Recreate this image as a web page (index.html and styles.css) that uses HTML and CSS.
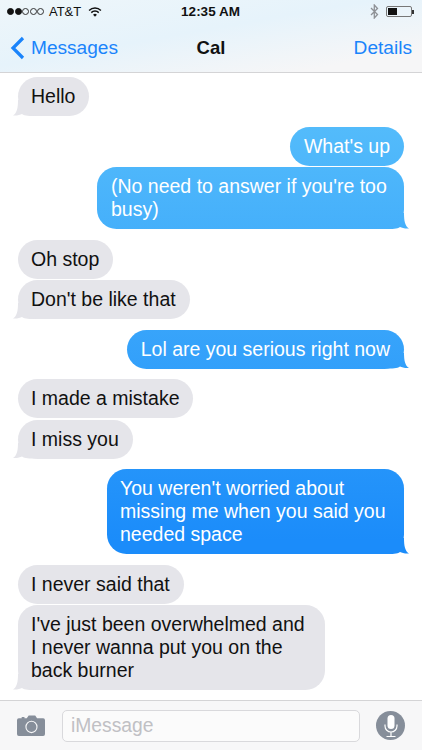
FILE: index.html
```html
<!DOCTYPE html>
<html lang="en">
<head>
  <meta charset="UTF-8" />
  <meta name="viewport" content="width=device-width, initial-scale=1.0"/>
  <title>Cal</title>
  <link rel="stylesheet" href="styles.css">
</head>
<body>
  <header class="top">
    <div class="status">
      <div class="status-left">
        <span class="dot full"></span><span class="dot full"></span><span class="dot"></span><span class="dot"></span><span class="dot"></span>
        <span class="carrier">AT&amp;T</span>
        <svg class="wifi" width="14" height="10" viewBox="0 0 15 11">
          <path d="M1 3.8a9.2 9.2 0 0 1 13 0" fill="none" stroke="#111" stroke-width="1.6"/>
          <path d="M3.4 6.2a5.8 5.8 0 0 1 8.2 0" fill="none" stroke="#111" stroke-width="1.6"/>
          <path d="M7.5 10.8 5.4 8.4a3 3 0 0 1 4.2 0z" fill="#111"/>
        </svg>
      </div>
      <div class="clock">12:35 AM</div>
      <div class="status-right">
        <svg class="bt" width="9" height="15" viewBox="0 0 9 15">
          <path d="M1 4l6.5 6.5L4.3 14V1l3.2 3.5L1 11" fill="none" stroke="#8e9196" stroke-width="1.3"/>
        </svg>
        <div class="battery"><div class="charge"></div></div>
        <div class="battery-tip"></div>
      </div>
    </div>
    <nav class="navbar">
      <a class="back">
        <svg width="15" height="24" viewBox="0 0 15 24">
          <path d="M13 2 3 12l10 10" fill="none" stroke="#1a84fb" stroke-width="3.2"/>
        </svg>
        Messages
      </a>
      <strong class="title">Cal</strong>
      <a class="details">Details</a>
    </nav>
  </header>

  <main class="thread">
    <div class="msg in tail">Hello</div>
    <div class="msg out group">What's up</div>
    <div class="msg out tail close">(No need to answer if you're too busy)</div>
    <div class="msg in group">Oh stop</div>
    <div class="msg in tail close">Don't be like that</div>
    <div class="msg out tail group">Lol are you serious right now</div>
    <div class="msg in group">I made a mistake</div>
    <div class="msg in tail close">I miss you</div>
    <div class="msg out tail group narrow">You weren't worried about missing me when you said you needed space</div>
    <div class="msg in group">I never said that</div>
    <div class="msg in tail close">I've just been overwhelmed and I never wanna put you on the back burner</div>
  </main>

  <footer class="composer">
    <svg class="camera" width="28" height="21" viewBox="0 0 30 22" preserveAspectRatio="none">
      <path fill-rule="evenodd" fill="#868e9a" d="M2 3.5h3V2h3v1.5h2.5L12.5 .5h7l2 3H28a2 2 0 0 1 2 2V20a2 2 0 0 1-2 2H2a2 2 0 0 1-2-2V5.5a2 2 0 0 1 2-2zM15.5 6a6.5 6.5 0 1 0 0 13 6.5 6.5 0 0 0 0-13zm0 1.2a5.3 5.3 0 1 1 0 10.6 5.3 5.3 0 0 1 0-10.6z"/>
    </svg>
    <div class="field">iMessage</div>
    <div class="mic">
      <svg width="16" height="24" viewBox="0 0 16 24">
        <rect x="4.5" y="1" width="7" height="14" rx="3.5" fill="#fff"/>
        <path d="M2 10.5V12a6 6 0 0 0 12 0v-1.5M8 18v4M3.5 22.5h9" fill="none" stroke="#fff" stroke-width="1.2"/>
      </svg>
    </div>
  </footer>
</body>
</html>
```

FILE: styles.css
```css
body {
  margin: 0;
  height: 750px;
  overflow: hidden;
  display: flex;
  flex-direction: column;
  font-family: "Liberation Sans", Arial, sans-serif;
  background-color: white;
  color: #111;
}
.top {
  height: 72px;
  flex: none;
  border-bottom: 1px solid #d4d4d6;
  background: linear-gradient(170deg, #eef6fa 0%, #e6f3fb 45%, #f6f6f7 85%);
}
.status {
  display: flex;
  justify-content: space-between;
  align-items: center;
  height: 23px;
  padding: 0 8px 0 7px;
  font-size: 13.5px;
}
.status-left, .status-right {
  display: flex;
  align-items: center;
  width: 140px;
}
.status-right {
  justify-content: flex-end;
}
.dot {
  width: 7px;
  height: 7px;
  margin-right: 0.6px;
  border: 1px solid #333;
  border-radius: 50%;
  box-sizing: border-box;
}
.dot.full {
  background-color: #111;
  border-color: #111;
}
.carrier {
  margin: 0 7px 0 4px;
  font-size: 13px;
}
.clock {
  font-weight: bold;
}
.bt {
  margin-right: 7px;
}
.battery {
  width: 26px;
  height: 11px;
  padding: 1px;
  border: 1px solid #777;
  border-radius: 2px;
  box-sizing: border-box;
}
.charge {
  width: 9px;
  height: 100%;
  background-color: #111;
}
.battery-tip {
  width: 2px;
  height: 4px;
  background-color: #333;
}
.navbar {
  display: flex;
  justify-content: space-between;
  align-items: center;
  height: 49px;
  padding: 0 10px;
  font-size: 19.1px;
  color: #1a84fb;
}
.back {
  display: flex;
  align-items: center;
  gap: 6px;
  width: 130px;
}
.title {
  color: #111;
  font-size: 18.5px;
}
.details {
  width: 130px;
  text-align: right;
}
.thread {
  flex: 1;
  display: flex;
  flex-direction: column;
  padding: 4px 18px 0;
}
.msg {
  position: relative;
  box-sizing: border-box;
  max-width: 307px;
  padding: 8px 14px 8px 13px;
  border-radius: 19.5px;
  font-size: 19.5px;
  line-height: 23px;
}
.in {
  align-self: flex-start;
  background-color: #e5e5ea;
}
.out {
  align-self: flex-end;
  color: white;
  padding-left: 14px;
  background: linear-gradient(#54bcfb 120px, #1b8cfa 540px) fixed;
}
.narrow {
  width: 297px;
  padding-left: 13px;
}
.group {
  margin-top: 10.5px;
}
.close {
  margin-top: 1.5px;
}
.tail::after {
  content: "";
  position: absolute;
  z-index: -1;
  bottom: 0;
  width: 24px;
  height: 16px;
  background: inherit;
}
.in.tail::after {
  left: -5px;
  clip-path: path("M24 0 L5 0 C5 8 4 13 0 15.5 C4 15.8 7 15 9 14 C12 16 16 16 24 16 Z");
}
.out.tail::after {
  right: -5px;
  clip-path: path("M0 0 L19 0 C19 8 20 13 24 15.5 C20 15.8 17 15 15 14 C12 16 8 16 0 16 Z");
}
.composer {
  flex: none;
  display: flex;
  align-items: center;
  height: 49px;
  padding: 0 17px;
  gap: 16px;
  border-top: 1px solid #d4d4d6;
  background-color: #f7f7f8;
}
.camera {
  flex: none;
  margin-right: 1px;
}
.field {
  flex: 1;
  box-sizing: border-box;
  height: 32px;
  line-height: 30px;
  padding-left: 8px;
  border: 1px solid #d9d9dc;
  border-radius: 5px;
  background-color: #fbfbfb;
  color: #c0c0c4;
  font-size: 19.3px;
}
.mic {
  flex: none;
  display: flex;
  align-items: center;
  justify-content: center;
  width: 29px;
  height: 29px;
  border-radius: 50%;
  background-color: #868e9a;
}
```
